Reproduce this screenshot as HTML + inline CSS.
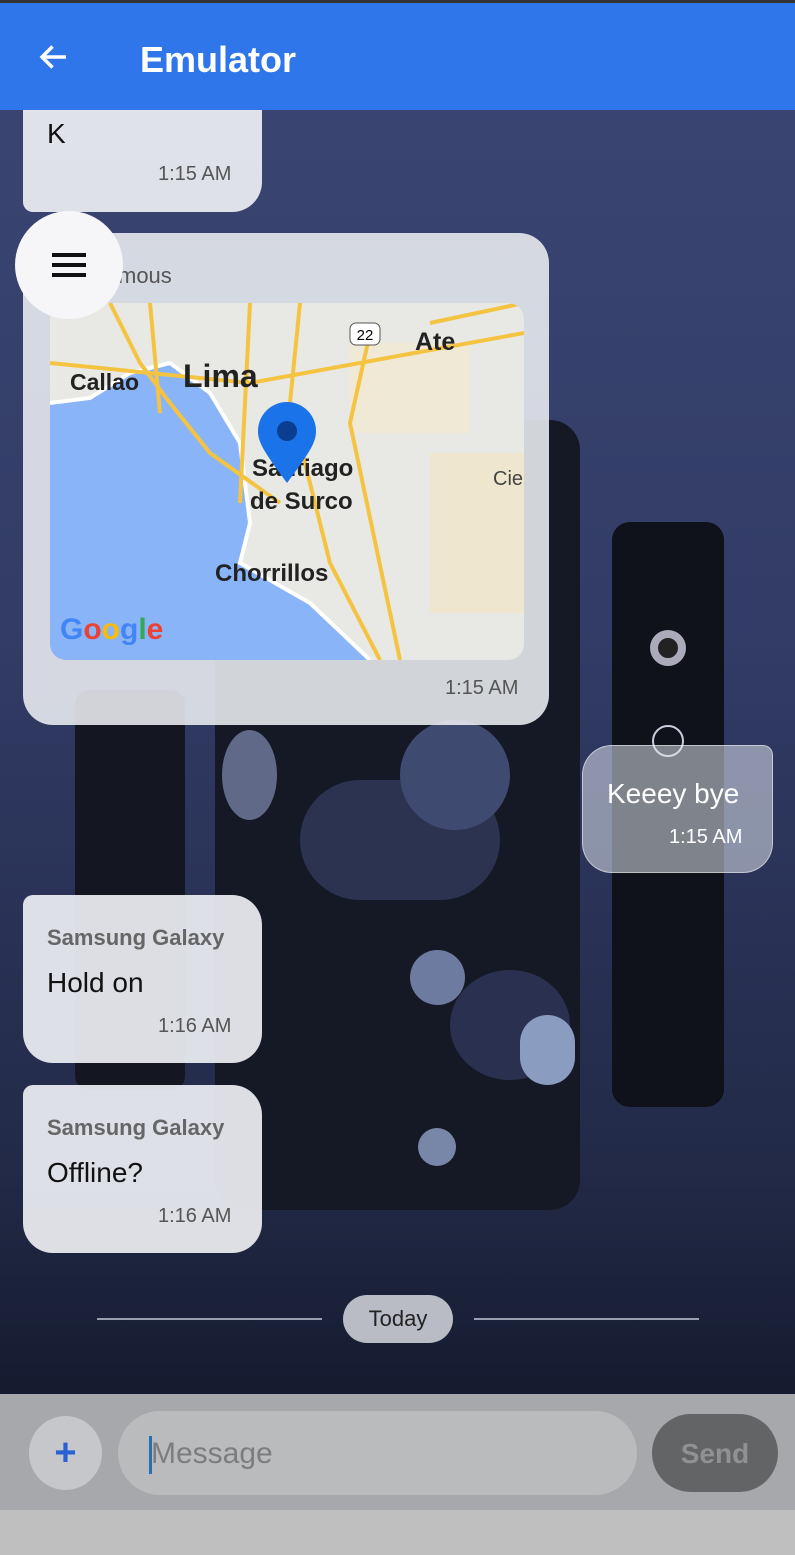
<!DOCTYPE html>
<html><head><meta charset="utf-8"><style>
*{margin:0;padding:0;box-sizing:border-box}
body{width:795px;height:1555px;overflow:hidden;font-family:"Liberation Sans",sans-serif;position:relative;background:linear-gradient(180deg,#3b4674 0%,#323c66 40%,#222a48 75%,#151c30 89%);}
.abs{position:absolute}
.hdr{left:0;top:0;width:795px;height:110px;background:#2f76ea;border-top:3px solid #333}
.hdr .t{left:140px;top:36px;color:#fff;font-size:36px;font-weight:bold}
.bub{position:absolute;background:rgba(236,238,242,0.93);border-radius:10px 30px 30px 30px}
.time{position:absolute;color:#555;font-size:20px}
.name{position:absolute;color:#666;font-size:22px;font-weight:bold}
.msg{position:absolute;color:#111;font-size:28px}
</style></head><body>
<div class="abs" style="left:75px;top:690px;width:110px;height:400px;background:#141722;border-radius:14px"></div>
<div class="abs" style="left:215px;top:420px;width:365px;height:790px;background:#151925;border-radius:30px"></div>
<div class="abs" style="left:300px;top:780px;width:200px;height:120px;background:#2c3350;border-radius:60px"></div>
<div class="abs" style="left:400px;top:720px;width:110px;height:110px;background:#3f4a70;border-radius:50%"></div>
<div class="abs" style="left:450px;top:970px;width:120px;height:110px;background:#2a3150;border-radius:50%"></div>
<div class="abs" style="left:410px;top:950px;width:55px;height:55px;background:#6e7ba0;border-radius:50%"></div>
<div class="abs" style="left:520px;top:1015px;width:55px;height:70px;background:#8a9cc0;border-radius:30px"></div>
<div class="abs" style="left:222px;top:730px;width:55px;height:90px;background:#606a88;border-radius:50%"></div>
<div class="abs" style="left:418px;top:1128px;width:38px;height:38px;background:#7886a8;border-radius:50%"></div>
<div class="abs" style="left:612px;top:522px;width:112px;height:585px;background:#0f121a;border-radius:18px"></div>
<div class="abs" style="left:650px;top:630px;width:36px;height:36px;border:8px solid #aab;border-radius:50%;background:#222"></div>
<div class="abs" style="left:652px;top:725px;width:32px;height:32px;border:2px solid #ccd;border-radius:50%"></div>

<div class="abs hdr"><svg class="abs" style="left:36px;top:36px" width="36" height="36" viewBox="0 0 24 24"><path d="M20 12H5M11 5l-7 7 7 7" stroke="#fff" stroke-width="2.3" fill="none"/></svg><div class="abs t">Emulator</div></div>

<div class="bub" style="left:23px;top:110px;width:239px;height:102px;border-radius:0 0 30px 10px"><div class="msg" style="left:24px;top:8px">K</div><div class="time" style="left:135px;top:53px">1:15 AM</div></div>

<div class="bub" style="left:23px;top:233px;width:526px;height:492px;background:rgba(236,238,242,0.88)">
<div class="name" style="left:95px;top:30px;font-weight:normal;color:#555">mous</div>
<div class="abs" style="left:27px;top:70px;width:474px;height:357px;border-radius:16px;overflow:hidden;background:#e8e8e4">
<svg width="474" height="357" viewBox="0 0 474 357">
<rect x="380" y="150" width="94" height="160" fill="#efe6cf"/>
<rect x="300" y="40" width="120" height="90" fill="#efe9d6"/>
<path d="M0 100 L40 95 L80 70 L120 60 L160 90 L190 140 L200 220 L190 260 L260 300 L320 357 L0 357Z" fill="#8ab4f8"/>
<path d="M0 100 L40 95 L80 70 L120 60 L160 90 L190 140 L200 220 L190 260 L260 300 L320 357" stroke="#fff" stroke-width="4" fill="none"/>
<g stroke="#f5c342" stroke-width="4" fill="none">
<path d="M60 0 L90 60 L120 100 L160 150 L230 200"/><path d="M0 60 L200 80 L474 30"/><path d="M250 0 L240 100 L260 180 L280 260 L330 357"/><path d="M320 30 L300 120 L350 357"/><path d="M100 0 L110 110"/><path d="M200 0 L190 200"/><path d="M380 20 L474 0"/>
</g>
<rect x="300" y="20" width="30" height="22" rx="6" fill="#fff" stroke="#555"/>
<text x="315" y="37" font-size="15" text-anchor="middle" font-family="Liberation Sans">22</text>
<text x="365" y="47" font-size="25" fill="#222" font-family="Liberation Sans" font-weight="bold">Ate</text>
<text x="20" y="87" font-size="23" fill="#222" font-family="Liberation Sans" font-weight="bold">Callao</text>
<text x="133" y="84" font-size="32" fill="#222" font-family="Liberation Sans" font-weight="bold">Lima</text>
<text x="202" y="173" font-size="24" fill="#222" font-family="Liberation Sans" font-weight="bold">Santiago</text>
<text x="200" y="206" font-size="24" fill="#222" font-family="Liberation Sans" font-weight="bold">de Surco</text>
<text x="165" y="278" font-size="24" fill="#222" font-family="Liberation Sans" font-weight="bold">Chorrillos</text>
<text x="443" y="182" font-size="20" fill="#444" font-family="Liberation Sans">Cie</text>
<text x="10" y="336" font-size="30" font-family="Liberation Sans" font-weight="bold"><tspan fill="#4285f4">G</tspan><tspan fill="#ea4335">o</tspan><tspan fill="#fbbc05">o</tspan><tspan fill="#4285f4">g</tspan><tspan fill="#34a853">l</tspan><tspan fill="#ea4335">e</tspan></text>
<path d="M237 180 C215 150 208 140 208 128 A29 29 0 0 1 266 128 C266 140 259 150 237 180Z" fill="#1a73e8"/>
<circle cx="237" cy="128" r="10" fill="#0b3d91"/>
</svg></div>
<div class="time" style="left:422px;top:444px">1:15 AM</div>
</div>

<div class="abs" style="left:15px;top:211px;width:108px;height:108px;border-radius:50%;background:#f6f6f9"><div class="abs" style="left:37px;top:42px;width:34px;height:4px;background:#111;box-shadow:0 10px 0 #111,0 20px 0 #111"></div></div>

<div class="bub" style="left:582px;top:745px;width:191px;height:128px;background:rgba(220,225,235,0.55);border:1px solid rgba(255,255,255,0.5);border-radius:30px 10px 30px 30px"><div class="msg" style="left:24px;top:32px;color:#fff">Keeey bye</div><div class="time" style="left:86px;top:80px;color:#fff">1:15 AM</div></div>

<div class="bub" style="left:23px;top:895px;width:239px;height:168px"><div class="name" style="left:24px;top:30px">Samsung Galaxy</div><div class="msg" style="left:24px;top:72px">Hold on</div><div class="time" style="left:135px;top:120px">1:16 AM</div></div>
<div class="bub" style="left:23px;top:1085px;width:239px;height:168px"><div class="name" style="left:24px;top:30px">Samsung Galaxy</div><div class="msg" style="left:24px;top:72px">Offline?</div><div class="time" style="left:135px;top:120px">1:16 AM</div></div>

<div class="abs" style="left:97px;top:1318px;width:225px;height:2px;background:#9aa0b0"></div>
<div class="abs" style="left:474px;top:1318px;width:225px;height:2px;background:#9aa0b0"></div>
<div class="abs" style="left:343px;top:1295px;width:110px;height:48px;border-radius:24px;background:#b9bcc4;color:#222;font-size:22px;text-align:center;line-height:48px">Today</div>

<div class="abs" style="left:0;top:1394px;width:795px;height:116px;background:#a6a8ac"></div>
<div class="abs" style="left:0;top:1510px;width:795px;height:45px;background:#bfbfbf"></div>
<div class="abs" style="left:29px;top:1416px;width:73px;height:74px;border-radius:50%;background:#c5c7ca;color:#2a62d6;font-size:38px;font-weight:bold;text-align:center;line-height:74px">+</div>
<div class="abs" style="left:118px;top:1411px;width:519px;height:84px;border-radius:42px;background:#b9bbbd"><div class="abs" style="left:31px;top:25px;width:3px;height:38px;background:#2a6fb0"></div><div class="abs" style="left:33px;top:26px;font-size:30px;color:#7b7d80">Message</div></div>
<div class="abs" style="left:652px;top:1414px;width:126px;height:78px;border-radius:39px;background:#626466;color:#8f9193;font-size:28px;font-weight:bold;text-align:center;line-height:80px">Send</div>
</body></html>
